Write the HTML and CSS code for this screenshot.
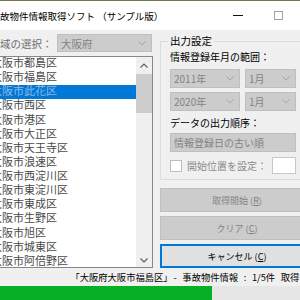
FILE: index.html
```html
<!DOCTYPE html>
<html lang="ja">
<head>
    <meta charset="UTF-8">
    <title>事故物件情報取得ソフト （サンプル版）</title>
    <link rel="stylesheet" href="styles.css">
</head>
<body>
    <div class="window">
        <div class="titlebar">
            <div class="title">事故物件情報取得ソフト （サンプル版）</div>
            <div class="caption-btn"><span class="min-icon"></span></div>
            <div class="caption-btn"><span class="max-icon"></span></div>
            <div class="caption-btn"></div>
        </div>

        <div class="content">
            <div class="left">
                <div class="region-row">
                    <span class="region-label">地域の選択：</span>
                    <div class="combo region-combo">
                        <span>大阪府</span>
                        <svg width="8" height="5" viewBox="0 0 8 5"><polyline points="0.5,0.5 4,4 7.5,0.5" fill="none" stroke="#a6a6a6" stroke-width="1"/></svg>
                    </div>
                </div>
                <div class="listbox">
                    <ul class="items">
                        <li>大阪市都島区</li>
                        <li>大阪市福島区</li>
                        <li class="selected">大阪市此花区</li>
                        <li>大阪市西区</li>
                        <li>大阪市港区</li>
                        <li>大阪市大正区</li>
                        <li>大阪市天王寺区</li>
                        <li>大阪市浪速区</li>
                        <li>大阪市西淀川区</li>
                        <li>大阪市東淀川区</li>
                        <li>大阪市東成区</li>
                        <li>大阪市生野区</li>
                        <li>大阪市旭区</li>
                        <li>大阪市城東区</li>
                        <li>大阪市阿倍野区</li>
                        <li>大阪市住吉区</li>
                    </ul>
                    <div class="scrollbar">
                        <div class="arrow">
                            <svg width="8" height="5" viewBox="0 0 8 5"><polyline points="0.5,4.5 4,1 7.5,4.5" fill="none" stroke="#606060" stroke-width="1.2"/></svg>
                        </div>
                        <div class="thumb"></div>
                        <div class="track"></div>
                        <div class="arrow arrow-down">
                            <svg width="8" height="5" viewBox="0 0 8 5"><polyline points="0.5,0.5 4,4 7.5,0.5" fill="none" stroke="#606060" stroke-width="1.2"/></svg>
                        </div>
                    </div>
                </div>
            </div>

            <div class="right">
                <fieldset class="group">
                    <legend>出力設定</legend>
                    <div class="field-label">情報登録年月の範囲：</div>
                    <div class="combo-row">
                        <div class="combo year"><span>2011年</span><svg width="8" height="5" viewBox="0 0 8 5"><polyline points="0.5,0.5 4,4 7.5,0.5" fill="none" stroke="#a6a6a6" stroke-width="1"/></svg></div>
                        <div class="combo month"><span>1月</span><svg width="8" height="5" viewBox="0 0 8 5"><polyline points="0.5,0.5 4,4 7.5,0.5" fill="none" stroke="#a6a6a6" stroke-width="1"/></svg></div>
                    </div>
                    <div class="combo-row second">
                        <div class="combo year"><span>2020年</span><svg width="8" height="5" viewBox="0 0 8 5"><polyline points="0.5,0.5 4,4 7.5,0.5" fill="none" stroke="#a6a6a6" stroke-width="1"/></svg></div>
                        <div class="combo month"><span>1月</span><svg width="8" height="5" viewBox="0 0 8 5"><polyline points="0.5,0.5 4,4 7.5,0.5" fill="none" stroke="#a6a6a6" stroke-width="1"/></svg></div>
                    </div>
                    <div class="field-label order-label">データの出力順序：</div>
                    <div class="combo order"><span>情報登録日の古い順</span></div>
                    <div class="check-row">
                        <span class="checkbox"></span>
                        <span class="check-label">開始位置を設定：</span>
                        <span class="textbox"></span>
                    </div>
                </fieldset>

                <div class="buttons">
                    <div class="btn">取得開始 (<u>R</u>)</div>
                    <div class="btn">クリア (<u>C</u>)</div>
                    <div class="btn default">キャンセル (<u>C</u>)</div>
                </div>
            </div>
        </div>

        <div class="status">「大阪府大阪市福島区」 - 事故物件情報 : 1/5件 取得中…</div>
        <div class="progress"><div class="bar" style="width: 224px"></div></div>
    </div>
</body>
</html>
```

FILE: styles.css
```css
* {
    box-sizing: border-box;
}
body {
    margin: 0;
    width: 300px;
    height: 300px;
    overflow: hidden;
    background: #f0f0f0;
    font-family: "Noto Sans CJK JP", "Noto Sans", sans-serif;
    color: #000;
}
.window {
    width: 350px;
    margin-left: -12px;
}
.titlebar {
    display: flex;
    align-items: center;
    height: 30px;
    background: #fff;
    border-top: 1px solid #7a7550;
}
.title {
    flex: 1;
    min-width: 0;
    padding-left: 2.5px;
    font-size: 9.5px;
    white-space: nowrap;
}
.caption-btn {
    flex: none;
    width: 40px;
    height: 29px;
    display: flex;
    align-items: center;
    justify-content: center;
}
.min-icon {
    width: 10px;
    height: 1px;
    background: #111;
}
.max-icon {
    width: 9px;
    height: 9px;
    border: 1px solid #a0a0a0;
}
.content {
    display: flex;
    gap: 7px;
    padding-top: 4px;
}
.left {
    width: 165px;
}
.region-row {
    display: flex;
    align-items: center;
    height: 18px;
}
.region-label {
    width: 69px;
    padding-left: 1.5px;
    font-size: 10.5px;
    color: #6d6d6d;
    white-space: nowrap;
}
.combo {
    display: flex;
    align-items: center;
    justify-content: space-between;
    height: 19px;
    padding: 0 5px 0 3px;
    background: #ccc;
    border: 1px solid #bfbfbf;
    color: #838383;
    font-size: 10px;
    white-space: nowrap;
}
.region-combo {
    width: 95px;
    height: 18px;
    font-size: 10.5px;
}
.listbox {
    display: flex;
    height: 212px;
    margin-top: 4px;
    background: #fff;
    border: 1px solid #828790;
}
.items {
    flex: 1;
    margin: 0;
    padding: 0;
    list-style: none;
    overflow: hidden;
}
.items li {
    height: 14.14px;
    line-height: 11px;
    padding-left: 2px;
    font-size: 11px;
    color: #4a4a4a;
    white-space: nowrap;
}
.items li.selected {
    background: #0078d7;
    color: #8fb8e0;
}
.scrollbar {
    width: 16px;
    display: flex;
    flex-direction: column;
    background: #f0f0f0;
}
.arrow {
    height: 17px;
    display: flex;
    align-items: center;
    justify-content: center;
}
.arrow-down {
    padding-top: 4px;
}
.thumb {
    height: 39px;
    background: #cdcdcd;
}
.track {
    flex: 1;
}
.right {
    width: 154px;
    margin-top: 1px;
}
.group {
    margin: 0 8px 0 0;
    padding: 0 9px 5px;
    border: 1px solid #dcdcdc;
}
.group legend {
    margin-left: -2px;
    padding: 0 2px;
    font-size: 10.5px;
    line-height: 12px;
}
.field-label {
    margin-top: 3px;
    font-size: 10px;
    line-height: 14px;
    white-space: nowrap;
}
.order-label {
    margin-top: 5px;
}
.combo-row {
    display: flex;
    gap: 5px;
    margin-top: 5px;
}
.combo-row.second {
    margin-top: 4px;
}
.year {
    width: 70px;
}
.month {
    flex: 1;
}
.order {
    margin-top: 3px;
}
.check-row {
    display: flex;
    align-items: center;
    height: 17px;
    margin-top: 5px;
}
.checkbox {
    width: 12px;
    height: 12px;
    background: #fff;
    border: 1px solid #bcbcbc;
}
.check-label {
    margin-left: 5px;
    font-size: 10px;
    color: #8a8a8a;
    white-space: nowrap;
}
.textbox {
    margin-left: auto;
    width: 24px;
    height: 17px;
    background: #fff;
    border: 1px solid #c8c8c8;
}
.buttons {
    display: flex;
    flex-direction: column;
    gap: 4px;
    margin-top: 8px;
}
.btn {
    height: 24px;
    display: flex;
    align-items: center;
    justify-content: center;
    background: #ccc;
    border: 1px solid #bfbfbf;
    color: #838383;
    font-size: 9px;
    white-space: pre;
}
.btn.default {
    background: #e1e1e1;
    border: 2px solid #0078d7;
    color: #000;
}
.status {
    padding: 2px 0 2px 87px;
    font-size: 9.3px;
    line-height: 14px;
    word-spacing: 3.5px;
    font-feature-settings: "palt";
    white-space: nowrap;
}
.progress {
    height: 14px;
    background: #e6e6e6;
}
.bar {
    height: 100%;
    background: #06b025;
}
```
